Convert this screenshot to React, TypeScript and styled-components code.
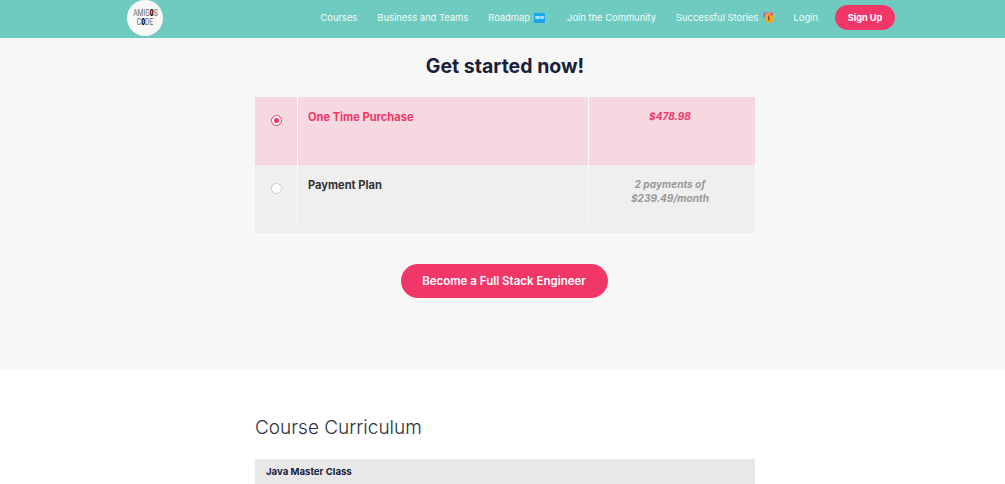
import React from "react";
import styled, { createGlobalStyle } from "styled-components";

const Global = createGlobalStyle`
  html, body { margin: 0; padding: 0; background: #fff; }
  body { font-family: "Inter", "Liberation Sans", sans-serif; height: 484px; overflow: hidden; }
`;
const Header = styled.header`
  height: 38px; background: #6fcbc0; display: flex; align-items: center;
  padding: 0 110px 3px 127px; justify-content: space-between; box-sizing: border-box;
`;
const LogoDisc = styled.div`
  width: 36px; height: 36px; border-radius: 50%; background: #f8f8f6; display: flex; flex-direction: column;
  align-items: center; justify-content: center; margin-top: 1px;
`;
const LogoLine = styled.span`
  color: #666; font: 400 9px/9.5px "Roboto", sans-serif; transform: scaleX(0.74); white-space: nowrap;
  b { color: #000; font-weight: 900; }
`;
const Nav = styled.nav`display: flex; align-items: center;`;
const NavLink = styled.a<{ $gap?: number }>`
  color: #f4fbfa; font-size: 9.4px; font-weight: 400; margin-right: ${p => p.$gap ?? 20}px; display: flex; align-items: center; gap: 4px; white-space: nowrap;
`;
const NewBadge = styled.span`
  width: 11px; height: 10px; background: #1ca7ec; border-radius: 1px; color: #fff; font-size: 3.5px; font-weight: 700;
  display: flex; align-items: center; justify-content: center;
`;
const SignUp = styled.a`
  height: 25px; width: 60px; border-radius: 13px; background: #f13668; color: #fff; font-size: 9.2px; font-weight: 700;
  display: flex; align-items: center; justify-content: center;
`;
const Pricing = styled.section`
  background: #f7f7f7; height: 332px; display: flex; flex-direction: column; align-items: center; padding-left: 5px; box-sizing: border-box;
`;
const Title = styled.h2`
  margin: 15px 0 17px; font-size: 19.5px; line-height: 27px; font-weight: 700; color: #18203a;
`;
const Options = styled.div`width: 500px; display: flex; flex-direction: column;`;
const Row = styled.div<{ $active?: boolean; $pad?: number }>`
  display: grid; grid-template-columns: 42px 292px 1fr; height: 68px; box-sizing: border-box; padding-bottom: ${p => p.$pad ?? 0}px;
  background: ${p => (p.$active ? "#f6d8e0" : "#efefef")}; color: ${p => (p.$active ? "#f13668" : "#333")};
`;
const RadioCell = styled.div`display: flex; justify-content: center; padding-top: 18px; box-sizing: border-box;`;
const Radio = styled.span<{ $on?: boolean }>`
  width: 9px; height: 9px; border-radius: 50%; background: #fff; box-sizing: content-box;
  border: 1px solid ${p => (p.$on ? "#f13668" : "#ccc")}; display: flex; align-items: center; justify-content: center;
  &::after { content: ""; width: 5px; height: 5px; border-radius: 50%; background: ${p => (p.$on ? "#f13668" : "transparent")}; }
`;
const NameCell = styled.div`
  border-left: 1px solid #fafafa; border-right: 1px solid #fafafa; padding: 12px 10px; font-size: 11.1px; line-height: 16px; font-weight: 700;
`;
const PriceCell = styled.div<{ $muted?: boolean }>`
  padding: 12px 4px 0 0; text-align: center; font-size: 10.1px; line-height: 14px; font-weight: 700; font-style: italic;
  color: ${p => (p.$muted ? "#999" : "#f13668")};
`;
const Cta = styled.a`
  margin: 31px 2px 0 0; width: 207px; height: 34px; border-radius: 17px; background: #f13668; color: #fff; font-size: 11.5px; font-weight: 600;
  display: flex; align-items: center; justify-content: center;
`;
const Curriculum = styled.section`width: 500px; margin: 0 auto; padding: 45px 0 0 5px;`;
const Heading = styled.h3`margin: 0 0 18px; font-size: 19px; line-height: 26px; font-weight: 300; color: #2a2f3d;`;
const Module = styled.div`
  background: #e8e8e8; height: 25px; padding: 0 11px; display: flex; align-items: center; font-size: 9.6px; font-weight: 700; color: #18203a;
`;

const links = ["Courses", "Business and Teams"];

const Party = () => (
  <svg width="11" height="11" viewBox="0 0 11 11" aria-hidden="true">
    <rect x="0.5" y="0.5" width="5" height="5" fill="#9a63c9" />
    <rect x="2" y="1" width="8" height="9.5" rx="2" fill="#f5a623" />
    <rect x="7" y="0.5" width="3" height="3" fill="#e9607a" />
    <path d="M5 3.5 L6.5 3.5 L6.5 8.5 L5 8.5 Z" fill="#8a5a1e" />
  </svg>
);

export default function App() {
  return (
    <>
      <Global />
      <Header>
        <LogoDisc>
          <LogoLine>AMIG<b>0</b>S</LogoLine>
          <LogoLine>C<b>0</b>DE</LogoLine>
        </LogoDisc>
        <Nav>
          {links.map(l => <NavLink key={l}>{l}</NavLink>)}
          <NavLink $gap={22}>Roadmap <NewBadge>NEW</NewBadge></NavLink>
          <NavLink>Join the Community</NavLink>
          <NavLink>Successful Stories <Party /></NavLink>
          <NavLink $gap={17}>Login</NavLink>
          <SignUp>Sign Up</SignUp>
        </Nav>
      </Header>
      <Pricing>
        <Title>Get started now!</Title>
        <Options>
          <Row $active>
            <RadioCell><Radio $on /></RadioCell>
            <NameCell>One Time Purchase</NameCell>
            <PriceCell>$478.98</PriceCell>
          </Row>
          <Row $pad={6}>
            <RadioCell><Radio /></RadioCell>
            <NameCell>Payment Plan</NameCell>
            <PriceCell $muted>2 payments of<br />$239.49/month</PriceCell>
          </Row>
        </Options>
        <Cta>Become a Full Stack Engineer</Cta>
      </Pricing>
      <Curriculum>
        <Heading>Course Curriculum</Heading>
        <Module>Java Master Class</Module>
      </Curriculum>
    </>
  );
}
